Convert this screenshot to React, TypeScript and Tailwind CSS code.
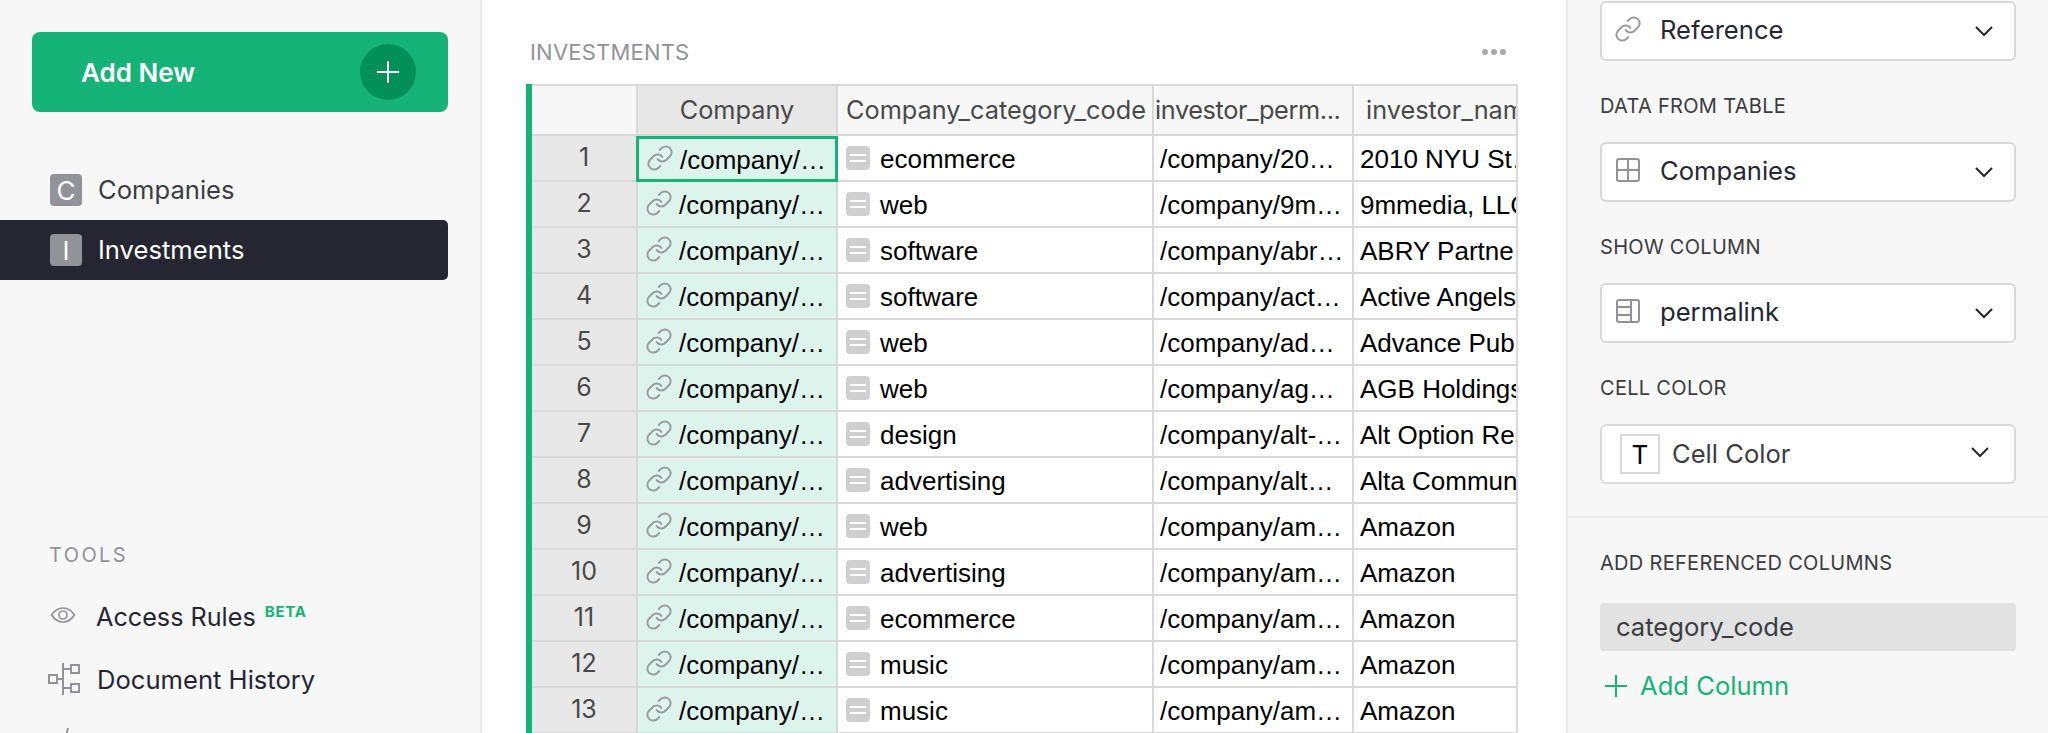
import { ReactNode } from "react";

const rows = [
  ["1", "ecommerce", "/company/20…", "2010 NYU St…"],
  ["2", "web", "/company/9m…", "9mmedia, LLC"],
  ["3", "software", "/company/abr…", "ABRY Partne"],
  ["4", "software", "/company/act…", "Active Angels"],
  ["5", "web", "/company/ad…", "Advance Publications"],
  ["6", "web", "/company/ag…", "AGB Holdings"],
  ["7", "design", "/company/alt-…", "Alt Option Research"],
  ["8", "advertising", "/company/alt…", "Alta Communications"],
  ["9", "web", "/company/am…", "Amazon"],
  ["10", "advertising", "/company/am…", "Amazon"],
  ["11", "ecommerce", "/company/am…", "Amazon"],
  ["12", "music", "/company/am…", "Amazon"],
  ["13", "music", "/company/am…", "Amazon"],
];

const cols = "grid grid-cols-[106px_200px_316px_200px_164px]";

function LinkIcon({ className }: { className?: string }) {
  return (
    <svg viewBox="0 0 24 24" fill="none" stroke="#9b9ba1" strokeWidth="1.7" strokeLinecap="round" className={className}>
      <path d="M10 13a5 5 0 0 0 7.540.540l3-3a5 5 0 0 0-7.070-7.070l-1.720 1.710" />
      <path d="M14 11a5 5 0 0 0-7.540-.540l-3 3a5 5 0 0 0 7.070 7.070l1.710-1.710" />
    </svg>
  );
}

function Chevron() {
  return (
    <svg viewBox="0 0 20 20" fill="none" stroke="#262633" strokeWidth="2" className="w-5 h-5 shrink-0">
      <path d="M2 6l8 8 8-8" />
    </svg>
  );
}

function Plus({ color, size }: { color: string; size: string }) {
  return (
    <svg viewBox="0 0 22 22" fill="none" stroke={color} strokeWidth="2" className={size}>
      <path d="M11 0v22M0 11h22" />
    </svg>
  );
}

function Select({ icon, label }: { icon: ReactNode; label: string }) {
  return (
    <div className="h-[60px] rounded-[6px] border-2 border-[#d9d9d9] bg-white flex items-center pl-[14px] pr-[20px] text-[#262633]">
      <span className="w-6 h-6 shrink-0 mr-[20px] -mt-[4px]">{icon}</span>
      <span className="flex-1 text-[25.6px] leading-none -mt-[2px]">{label}</span>
      <Chevron />
    </div>
  );
}

function Label({ children }: { children: ReactNode }) {
  return <div className="text-[20px] leading-[22px] tracking-[0.3px] text-[#3c3c42]">{children}</div>;
}

function Sidebar() {
  return (
    <aside className="w-[482px] shrink-0 h-full bg-[#f7f7f7] border-r-2 border-[#e8e8e8] overflow-hidden pt-8">
      <div className="ml-8 w-[416px] h-20 rounded-[8px] bg-[#16b378] flex items-center justify-between pl-[49px] pr-8 text-white">
        <span className="text-[26px] font-semibold pt-px">Add New</span>
        <span className="w-14 h-14 rounded-full bg-[#009058] flex items-center justify-center">
          <Plus color="#fff" size="w-[22px] h-[22px]" />
        </span>
      </div>
      <div className="mt-12 w-[448px]">
        <div className="h-[60px] flex items-center pl-[50px] text-[#3c3c42]">
          <span className="w-8 h-8 rounded-[4px] bg-[#929299] text-white text-[26px] flex items-center justify-center mr-4">C</span>
          <span className="text-[25.6px] pt-px">Companies</span>
        </div>
        <div className="h-[60px] flex items-center pl-[50px] bg-[#262633] rounded-r-[5px] text-white">
          <span className="w-8 h-8 rounded-[4px] bg-[#929299] text-white text-[26px] flex items-center justify-center mr-4">I</span>
          <span className="text-[25.6px] pt-px">Investments</span>
        </div>
      </div>
      <div className="mt-[264px]">
        <div className="pl-[49px] text-[20px] leading-[22px] tracking-[2.4px] text-[#929299]">TOOLS</div>
        <div className="mt-[21px] h-[62px] flex items-center pl-[50px] text-[#262633]">
          <svg viewBox="0 0 26 24" fill="none" stroke="#929299" strokeWidth="1.7" className="w-[26px] h-6 mr-[20px] -mt-[6px]">
            <path d="M1.500 12C4.500 7.500 8.500 5 13 5s8.500 2.500 11.500 7c-3 4.500-7 7-11.500 7S4.500 16.500 1.500 12z" />
            <circle cx="13" cy="12" r="4" />
          </svg>
          <span className="text-[25.2px]">Access Rules</span>
          <span className="ml-[9px] text-[15px] leading-none font-bold tracking-[0.8px] text-[#16b378] -mt-[14px]">BETA</span>
        </div>
        <div className="h-[62px] flex items-center pl-[48px] text-[#262633]">
          <svg viewBox="0 0 32 32" fill="none" stroke="#929299" strokeWidth="2" className="w-8 h-8 mr-[17px] -mt-[2px]">
            <rect x="1" y="12" width="8" height="8" />
            <rect x="23" y="2" width="8" height="8" />
            <rect x="23" y="21" width="8" height="8" />
            <path d="M9 16h6M15 0v32M15 6h8M15 25h8" />
          </svg>
          <span className="text-[25.6px]">Document History</span>
        </div>
        <div className="pl-[60px] mt-[17px]">
          <svg viewBox="0 0 14 8" fill="none" stroke="#929299" strokeWidth="2" className="w-[14px] h-2">
            <path d="M8 0L6 8" />
          </svg>
        </div>
      </div>
    </aside>
  );
}

function Table() {
  return (
    <div className="w-[992px] border-l-[6px] border-[#16b378] overflow-hidden text-[26px]">
      <div className={`${cols} h-[52px] border-t-2 border-[#d9d9d9] text-[#494949] text-[25.3px]`}>
        <div className="bg-[#f7f7f7] border-r-2 border-b-2 border-[#d9d9d9]" />
        <div className="bg-[#e8e8e8] border-r-2 border-b-2 border-[#d9d9d9] flex items-center justify-center">Company</div>
        <div className="bg-[#f7f7f7] border-r-2 border-b-2 border-[#d9d9d9] flex items-center pl-[8px]">Company_category_code</div>
        <div className="bg-[#f7f7f7] border-r-2 border-b-2 border-[#d9d9d9] flex items-center pl-px tracking-[-0.4px] whitespace-nowrap overflow-hidden">investor_perm...</div>
        <div className="bg-[#f7f7f7] border-r-2 border-b-2 border-[#d9d9d9] flex items-center pl-3 whitespace-nowrap overflow-hidden">investor_name</div>
      </div>
      {rows.map(([n, cat, perm, name], i) => (
        <div key={n} className={`${cols} h-[46px] text-black`} style={{ fontFamily: '"Liberation Sans", sans-serif' }}>
          <div className="bg-[#e8e8e8] border-r-2 border-b-2 border-[#d9d9d9] flex items-center justify-center text-[#494949] text-[25px] pb-px" style={{ fontFamily: "Inter, sans-serif" }}>{n}</div>
          <div className={`bg-[#dcf4eb] flex items-center pl-[7px] whitespace-nowrap overflow-hidden ${i === 0 ? "border-[3px] border-[#16b378] -ml-[2px] pl-[6px] relative" : "border-r-2 border-b-2 border-[#d9d9d9]"}`}>
            <LinkIcon className="w-7 h-7 shrink-0 mr-[6px] -mt-[3px]" />
            <span className="pt-[2px]">/company/…</span>
          </div>
          <div className="border-r-2 border-b-2 border-[#d9d9d9] flex items-center pl-2 whitespace-nowrap overflow-hidden">
            <span className="w-6 h-6 shrink-0 mr-[10px] rounded-[4px] bg-[#cfcfcf] flex flex-col justify-center gap-[4px] px-1">
              <span className="h-[2px] bg-white" />
              <span className="h-[2px] bg-white" />
            </span>
            <span className="pt-[2px]">{cat}</span>
          </div>
          <div className="border-r-2 border-b-2 border-[#d9d9d9] flex items-center pl-[6px] pt-[2px] whitespace-nowrap overflow-hidden">{perm}</div>
          <div className="border-r-2 border-b-2 border-[#d9d9d9] flex items-center pl-[6px] pt-[2px] whitespace-nowrap overflow-hidden">{name}</div>
        </div>
      ))}
    </div>
  );
}

export default function App() {
  return (
    <div className="flex w-[2048px] h-[733px] overflow-hidden bg-white" style={{ fontFamily: "Inter, sans-serif" }}>
      <Sidebar />
      <main className="flex-1 h-full overflow-hidden pl-11 pt-[38px]">
        <div className="flex items-center justify-between w-[992px] h-[28px] pl-[4px] pr-[12px] mb-[18px]">
          <span className="text-[22px] tracking-[0.2px] text-[#929299]">INVESTMENTS</span>
          <span className="flex gap-[3px]">
            <span className="w-[6px] h-[6px] rounded-full bg-[#a8a8ae]" />
            <span className="w-[6px] h-[6px] rounded-full bg-[#a8a8ae]" />
            <span className="w-[6px] h-[6px] rounded-full bg-[#a8a8ae]" />
          </span>
        </div>
        <Table />
      </main>
      <aside className="w-[482px] shrink-0 h-full overflow-hidden bg-[#f7f7f7] border-l-2 border-[#e8e8e8] pt-px">
        <div className="px-8 pb-8">
          <Select icon={<LinkIcon className="w-7 h-7 -m-[2px]" />} label="Reference" />
          <div className="mt-[34px] mb-[25px]"><Label>DATA FROM TABLE</Label></div>
          <Select
            label="Companies"
            icon={
              <svg viewBox="0 0 24 24" fill="none" stroke="#929299" strokeWidth="2" className="w-6 h-6">
                <rect x="1" y="1" width="22" height="22" rx="2" />
                <path d="M12 1v22M1 12h22" />
              </svg>
            }
          />
          <div className="mt-[34px] mb-[25px]"><Label>SHOW COLUMN</Label></div>
          <Select
            label="permalink"
            icon={
              <svg viewBox="0 0 24 24" fill="none" stroke="#929299" strokeWidth="2" className="w-6 h-6">
                <rect x="1" y="1" width="22" height="22" rx="2" />
                <path d="M15 1v22M1 8h14M1 16h14" />
              </svg>
            }
          />
          <div className="mt-[34px] mb-[25px]"><Label>CELL COLOR</Label></div>
          <div className="h-[60px] rounded-[6px] border-2 border-[#d9d9d9] bg-white flex items-center pl-[18px] pr-[24px]">
            <span className="w-10 h-10 border-2 border-[#d9d9d9] flex items-center justify-center text-[26px] text-black mr-[12px] shrink-0">T</span>
            <span className="flex-1 text-[25.6px] text-[#3c3c42]">Cell Color</span>
            <div className="-mt-[4px]"><Chevron /></div>
          </div>
        </div>
        <div className="border-t-2 border-[#e8e8e8] px-8 pt-[34px]">
          <Label>ADD REFERENCED COLUMNS</Label>
          <div className="mt-[29px] h-12 rounded-[4px] bg-[#e2e2e2] flex items-center pl-4 text-[25.6px] text-[#3c3c42]">category_code</div>
          <div className="mt-[19px] h-8 pl-[5px] flex items-center text-[#16b378] text-[25.6px]">
            <Plus color="#16b378" size="w-[22px] h-[22px] mr-[13px]" />
            <span>Add Column</span>
          </div>
        </div>
      </aside>
    </div>
  );
}
